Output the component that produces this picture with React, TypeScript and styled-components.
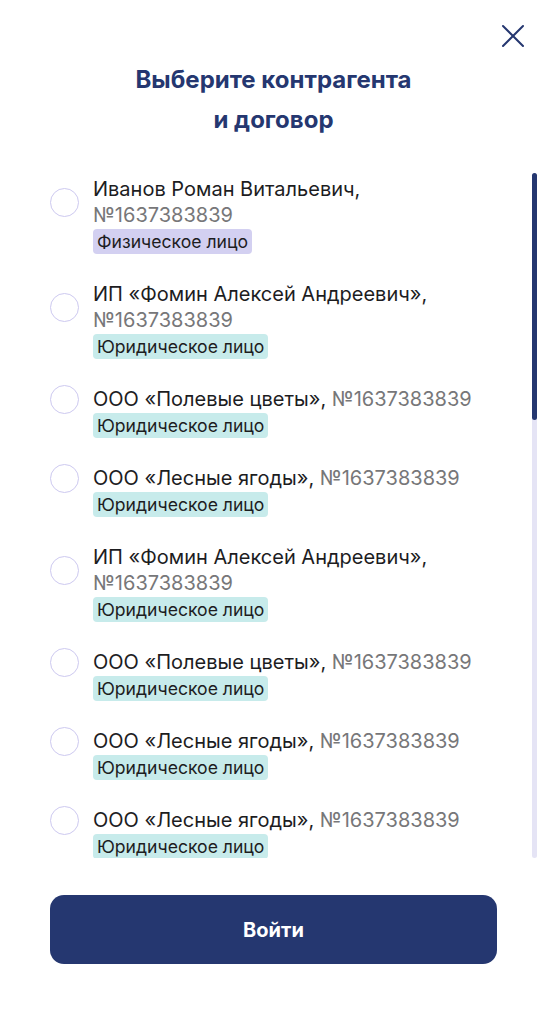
import React, { useLayoutEffect, useRef, useState } from "react";
import styled, { createGlobalStyle } from "styled-components";

const navy = "#253770";

const GlobalStyle = createGlobalStyle`
  html, body {
    margin: 0;
    padding: 0;
    background: #fff;
  }
  body {
    font-family: Inter, "Noto Sans", "DejaVu Sans", sans-serif;
    color: #1d1d1f;
  }
  * {
    box-sizing: border-box;
  }
`;

const Screen = styled.div`
  height: 1024px;
  display: flex;
  flex-direction: column;
  position: relative;
`;

const Close = styled.button`
  position: absolute;
  top: 22px;
  right: 20px;
  width: 28px;
  height: 28px;
  padding: 0;
  border: none;
  background: none;
  display: flex;
  align-items: center;
  justify-content: center;
  cursor: pointer;
`;

const Title = styled.h1`
  margin: 60px 0 33px;
  text-align: center;
  font-size: 24px;
  line-height: 40px;
  font-weight: 700;
  color: ${navy};
`;

const Body = styled.div`
  flex: 1;
  min-height: 0;
  position: relative;
  display: flex;
`;

const List = styled.div`
  flex: 1;
  overflow-y: auto;
  padding: 3px 0 0 50px;
  scrollbar-width: none;
  &::-webkit-scrollbar {
    display: none;
  }
`;

const Track = styled.div`
  position: absolute;
  top: 0;
  bottom: 0;
  right: 10px;
  width: 5px;
  border-radius: 3px;
  background: #e5e4f5;
`;

const Thumb = styled.div`
  position: absolute;
  left: 0;
  right: 0;
  border-radius: 3px;
  background: ${navy};
`;

const Item = styled.label`
  display: grid;
  grid-template-columns: 29px 1fr;
  column-gap: 14px;
  margin-bottom: 27px;
  cursor: pointer;
`;

const Radio = styled.span<{ $on: boolean }>`
  align-self: center;
  width: 29px;
  height: 29px;
  margin: -2px 0;
  border-radius: 50%;
  border: 1px solid #cdc9f0;
  background: #fff;
  box-shadow: ${(p) => (p.$on ? `inset 0 0 0 7px ${navy}` : "none")};
`;

const Name = styled.div`
  font-size: 20px;
  line-height: 26px;
  color: #1d1d1f;
  white-space: nowrap;
`;

const Number = styled.span`
  color: #777779;
`;

const Tag = styled.span<{ $kind: "person" | "company" }>`
  grid-column: 2;
  justify-self: start;
  margin-top: 1px;
  padding: 0 4px;
  height: 25px;
  line-height: 25px;
  font-size: 17.6px;
  border-radius: 4px;
  color: #1d1d1f;
  background: ${(p) => (p.$kind === "person" ? "#d3d0f1" : "#c7ebeb")};
`;

const Footer = styled.div`
  padding: 37px 50px 60px;
`;

const Submit = styled.button`
  display: block;
  width: 100%;
  height: 69px;
  border: none;
  border-radius: 14px;
  background: ${navy};
  color: #fff;
  font-family: inherit;
  font-size: 20px;
  font-weight: 700;
  cursor: pointer;
`;

interface Party {
  name: string;
  number: string;
  kind: "person" | "company";
  wrap?: boolean;
}

const base: Party[] = [
  { name: "Иванов Роман Витальевич,", number: "№1637383839", kind: "person", wrap: true },
  { name: "ИП «Фомин Алексей Андреевич»,", number: "№1637383839", kind: "company", wrap: true },
  { name: "ООО «Полевые цветы», ", number: "№1637383839", kind: "company" },
  { name: "ООО «Лесные ягоды», ", number: "№1637383839", kind: "company" },
  { name: "ИП «Фомин Алексей Андреевич»,", number: "№1637383839", kind: "company", wrap: true },
  { name: "ООО «Полевые цветы», ", number: "№1637383839", kind: "company" },
  { name: "ООО «Лесные ягоды», ", number: "№1637383839", kind: "company" },
  { name: "ООО «Лесные ягоды», ", number: "№1637383839", kind: "company" },
];

const parties = [...base, ...base, ...base.slice(0, 5)];

const App: React.FC = () => {
  const [selected, setSelected] = useState<number | null>(null);
  const listRef = useRef<HTMLDivElement>(null);
  const [thumb, setThumb] = useState({ top: 0, height: 0 });

  const measure = () => {
    const el = listRef.current;
    if (!el) return;
    const ratio = el.clientHeight / el.scrollHeight;
    setThumb({
      height: el.clientHeight * ratio,
      top: el.scrollTop * ratio,
    });
  };

  useLayoutEffect(() => {
    measure();
    window.addEventListener("resize", measure);
    return () => window.removeEventListener("resize", measure);
  }, []);

  return (
    <Screen>
      <GlobalStyle />
      <Close aria-label="Закрыть">
        <svg width="24" height="24" viewBox="0 0 24 24" fill="none">
          <path d="M2 2L22 22M22 2L2 22" stroke={navy} strokeWidth="2" strokeLinecap="round" />
        </svg>
      </Close>
      <Title>
        Выберите контрагента
        <br />и договор
      </Title>
      <Body>
        <List ref={listRef} onScroll={measure}>
          {parties.map((p, i) => (
            <Item key={i} onClick={() => setSelected(i)}>
              <Radio $on={selected === i} />
              <Name>
                {p.name}
                {p.wrap ? <br /> : null}
                <Number>{p.number}</Number>
              </Name>
              <Tag $kind={p.kind}>
                {p.kind === "person" ? "Физическое лицо" : "Юридическое лицо"}
              </Tag>
            </Item>
          ))}
        </List>
        <Track>
          <Thumb style={{ top: thumb.top, height: thumb.height }} />
        </Track>
      </Body>
      <Footer>
        <Submit>Войти</Submit>
      </Footer>
    </Screen>
  );
};

export default App;
